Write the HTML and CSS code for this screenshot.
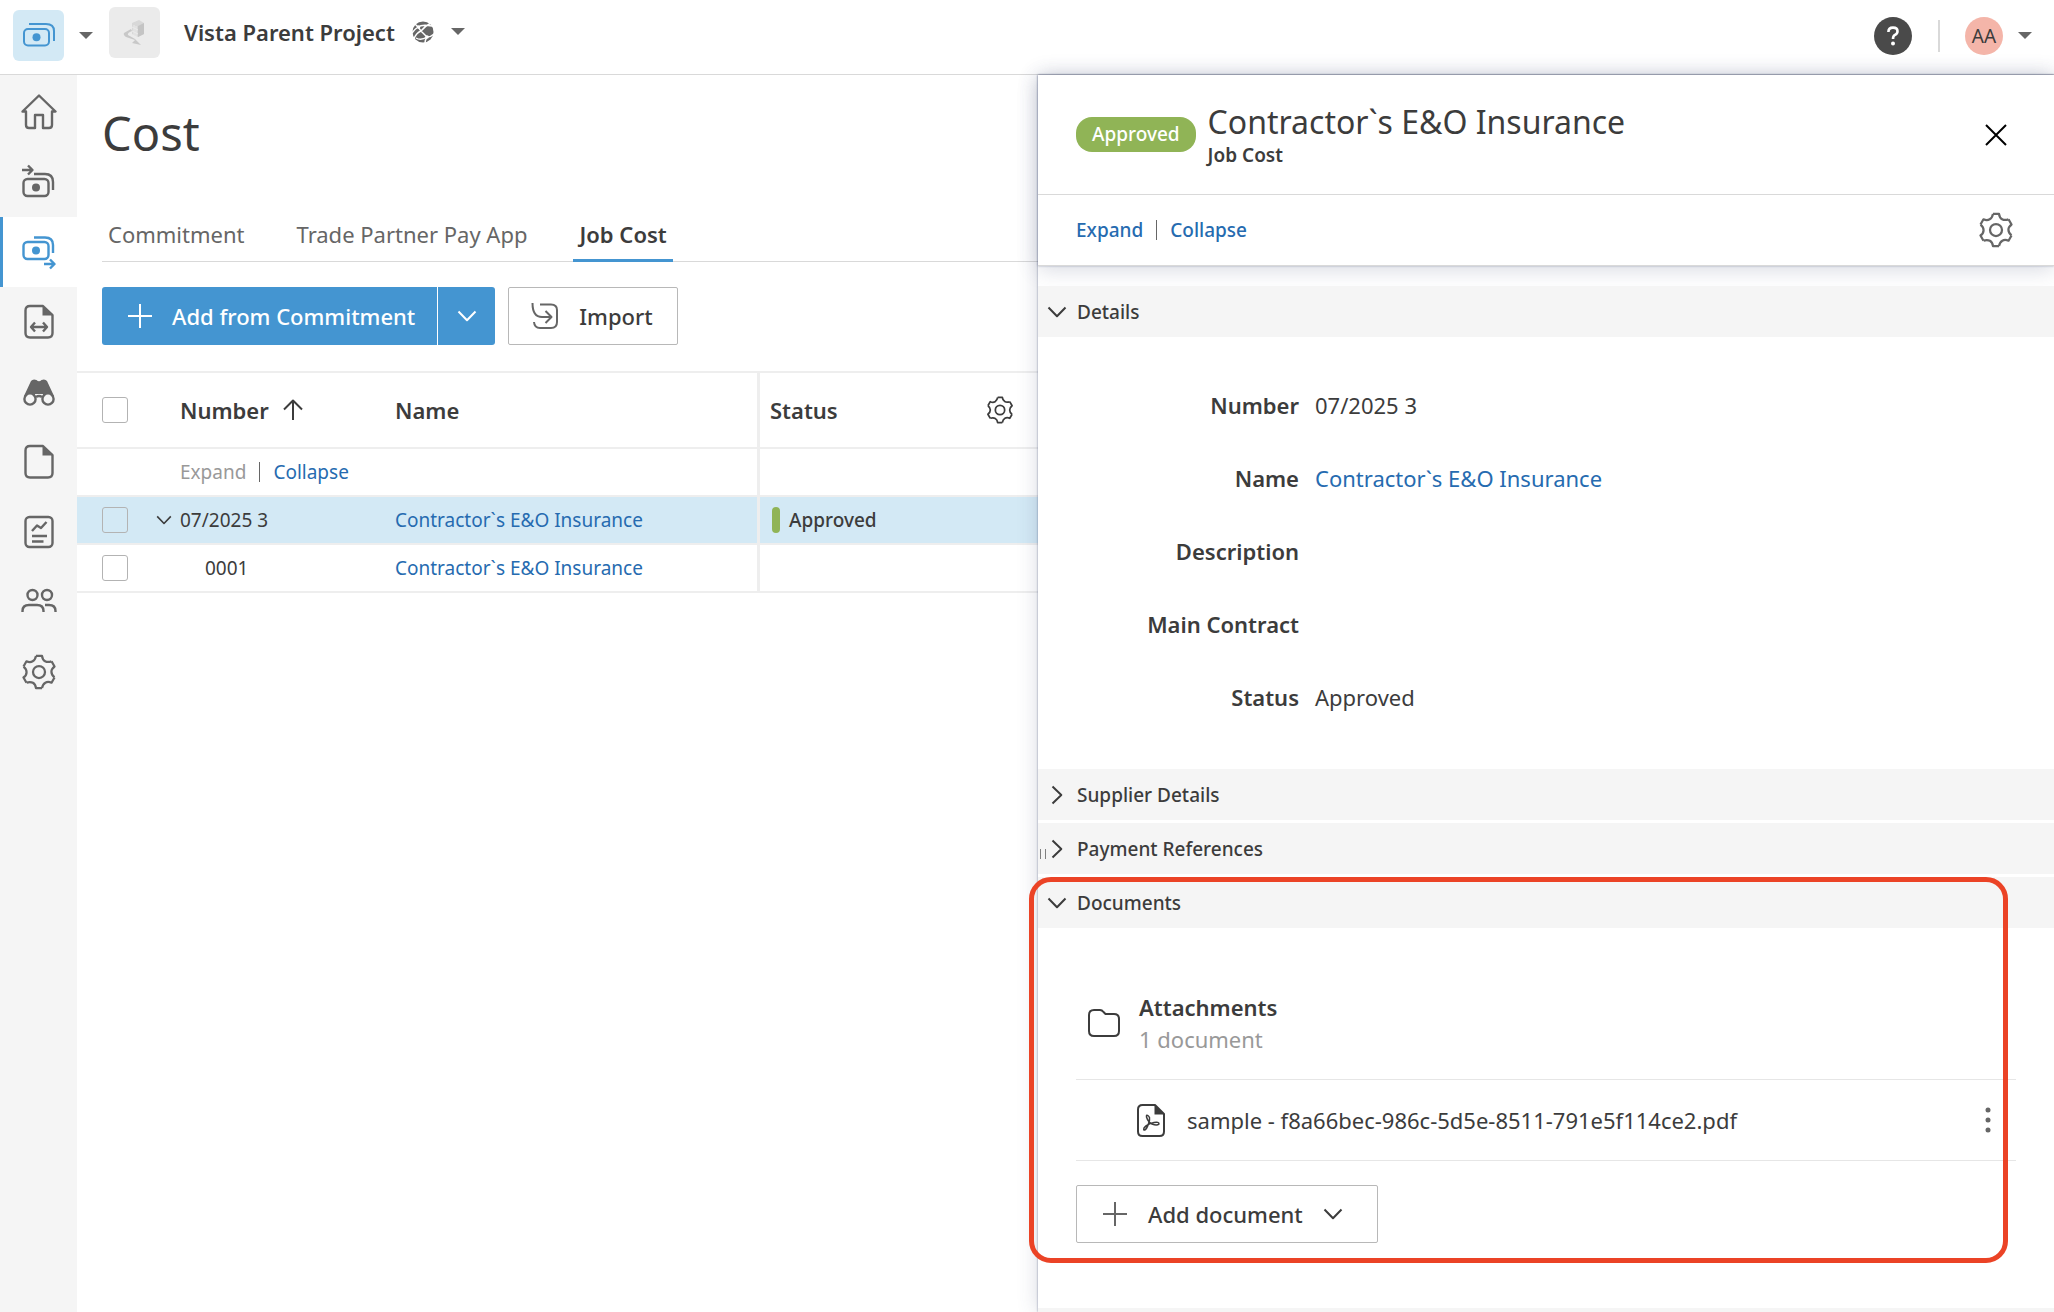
FILE: index.html
```html
<!DOCTYPE html>
<html lang="en">
<head>
  <meta charset="UTF-8">
  <meta name="viewport" content="width=device-width, initial-scale=1.0">
  <title>Cost - Job Cost</title>
  <link rel="stylesheet" href="styles.css">
</head>
<body>
  <!-- shared icons -->
  <svg class="sprite" aria-hidden="true">
    <symbol id="i-gear" viewBox="0 0 24 24">
      <g id="gear-part"><path d="M10 1.2H14C14.4 4.6 17 6.1 20.3 4.9"/></g>
      <use href="#gear-part" transform="rotate(60 12 12)"/>
      <use href="#gear-part" transform="rotate(120 12 12)"/>
      <use href="#gear-part" transform="rotate(180 12 12)"/>
      <use href="#gear-part" transform="rotate(240 12 12)"/>
      <use href="#gear-part" transform="rotate(300 12 12)"/>
      <circle cx="12" cy="12" r="4"/>
    </symbol>
    <symbol id="i-money" viewBox="0 0 36 36">
      <rect x="3" y="11" width="25" height="16.500" rx="4"/>
      <path d="M8 6H25Q33 6 33 13V23"/>
      <circle class="fill" cx="15.500" cy="19.200" r="4"/>
    </symbol>
    <symbol id="i-down" viewBox="0 0 20 12">
      <path d="M1.500 1.500L10 10.300L18.500 1.500"/>
    </symbol>
    <symbol id="i-plus" viewBox="0 0 26 26">
      <path d="M13 1V25M1 13H25"/>
    </symbol>
  </svg>

  <header class="topbar">
    <button class="app-logo" aria-label="Cost Management">
      <svg class="icon" width="36" height="36"><use href="#i-money"/></svg>
    </button>
    <button class="caret" aria-label="Switch product"></button>
    <span class="project-thumb">
      <svg width="24" height="28" viewBox="0 0 24 28">
        <path fill="#d8d8d8" d="M9 4L16 1L21 4V15L15 18L9 15Z"/>
        <path fill="#c4c4c4" d="M15 7L21 4V15L15 18Z"/>
        <path fill="none" stroke="#ebebeb" stroke-width="1" d="M11 6V16M13 7V17M9 8L15 11M9 12L15 15"/>
        <path fill="#c8c8c8" d="M8 10L1 14Q0 16 3 18L12 21L9 24L18 26L12 20L5 16Q4 14 9 12Z"/>
      </svg>
    </span>
    <button class="project-picker">
      Vista Parent Project
      <svg width="22" height="22" viewBox="0 0 22 22">
        <circle cx="11" cy="11" r="10.500" fill="#666"/>
        <path fill="none" stroke="#fff" stroke-width="1.400" d="M3 3Q5 5 6 6Q10 3 20 5M6 6Q3 8 0 12M6 6L9 10L15 16Q19 16 22 13M19 2Q13 5 9 10Q4 12 2 18M15 16Q13 19 13 22M15 16Q9 20 4 17"/>
        <circle cx="6.500" cy="6" r="1.800" fill="#fff"/>
        <circle cx="15" cy="16" r="1.800" fill="#fff"/>
      </svg>
      <span class="caret"></span>
    </button>
    <div class="topbar-right">
      <button class="help" aria-label="Help">
        <svg width="12" height="20" viewBox="0 0 12 20">
          <path fill="none" stroke="#fff" stroke-width="2.600" d="M1.400 6Q1.400 1.600 6 1.600Q10.500 1.600 10.500 5.200Q10.500 7.600 8 8.800Q6 9.800 6 13"/>
          <circle cx="6" cy="17.500" r="2" fill="#fff"/>
        </svg>
      </button>
      <span class="divider"></span>
      <button class="avatar">AA</button>
      <button class="caret" aria-label="Account menu"></button>
    </div>
  </header>

  <div class="layout">
    <nav class="sidebar">
      <a href="#" aria-label="Home">
        <svg class="icon" width="36" height="36" viewBox="0 0 36 36"><path d="M1.500 17.500L18 1.500L34.500 17.500H31V31Q31 34 28 34H22V21H14V34H8Q5 34 5 31V17.500Z"/></svg>
      </a>
      <a href="#" aria-label="Budget">
        <svg class="icon" width="36" height="36" viewBox="0 0 36 36">
          <rect x="2.500" y="15" width="25" height="17" rx="4"/>
          <path d="M13 10H24C29 10 32 13 32 18V26M1 6H11M7 1.500L11.500 6L7 10.500"/>
          <circle class="fill" cx="15" cy="23.500" r="4"/>
        </svg>
      </a>
      <a href="#" class="active" aria-label="Cost">
        <svg class="icon" width="36" height="36" viewBox="0 0 36 36">
          <rect x="2.500" y="8" width="25" height="17" rx="4"/>
          <path d="M13 3.500H24C29 3.500 32 6 32 11V19M23 30H33.500M29 25.500L33.500 30L29 34.500"/>
          <circle class="fill" cx="15" cy="16.500" r="4"/>
        </svg>
      </a>
      <a href="#" aria-label="Change Orders">
        <svg class="icon" width="36" height="36" viewBox="0 0 36 36">
          <path d="M22 2H9Q4.500 2 4.500 6.500V29Q4.500 33.500 9 33.500H27Q31.500 33.500 31.500 29V11Z"/>
          <path class="fill" d="M21.500 2L31.500 11.500H21.500Z"/>
          <path d="M10.500 23H25.500M14 18.500L10 23L14 27.500M22 18.500L26 23L22 27.500"/>
        </svg>
      </a>
      <a href="#" aria-label="Forecast">
        <svg class="icon" width="36" height="36" viewBox="0 0 36 36">
          <path class="fill" d="M3 22L10 7Q12 4.500 15.500 6Q18 8.500 20.500 6Q24 4.500 26 7L33 22L22 23V20H14V23Z"/>
          <circle class="lens" cx="9" cy="25" r="5.600"/>
          <circle class="lens" cx="27" cy="25" r="5.600"/>
          <path d="M15 23Q18 21 21 23"/>
        </svg>
      </a>
      <a href="#" aria-label="Files">
        <svg class="icon" width="36" height="36" viewBox="0 0 36 36">
          <path d="M22 2H9Q4.500 2 4.500 6.500V29Q4.500 33.500 9 33.500H27Q31.500 33.500 31.500 29V11Z"/>
          <path class="fill" d="M21.500 2L31.500 11.500H21.500Z"/>
        </svg>
      </a>
      <a href="#" aria-label="Reports">
        <svg class="icon" width="36" height="36" viewBox="0 0 36 36">
          <rect x="4.500" y="3" width="27" height="30" rx="4"/>
          <path d="M11 17L16 11.500L20 14L25.500 8M11 22H26M11 27.500H22.500"/>
        </svg>
      </a>
      <a href="#" aria-label="Members">
        <svg class="icon" width="36" height="36" viewBox="0 0 36 36">
          <circle cx="11.500" cy="11" r="5"/>
          <circle cx="26" cy="11" r="5"/>
          <path d="M1.500 28V27Q1.500 21 8 21H16Q22.500 21 22.500 27V28M24 21H28Q34.500 21 34.500 27V28"/>
        </svg>
      </a>
      <a href="#" aria-label="Settings">
        <svg class="icon" width="36" height="36"><use href="#i-gear"/></svg>
      </a>
    </nav>

    <main class="main">
      <h1>Cost</h1>
      <nav class="tabs">
        <a href="#">Commitment</a>
        <a href="#">Trade Partner Pay App</a>
        <a href="#" class="active">Job Cost</a>
      </nav>

      <div class="toolbar">
        <div class="split-btn">
          <button class="btn-main">
            <svg class="icon" width="26" height="26"><use href="#i-plus"/></svg>
            Add from Commitment
          </button>
          <button class="btn-more" aria-label="More add options">
            <svg class="icon" width="20" height="12"><use href="#i-down"/></svg>
          </button>
        </div>
        <button class="btn">
          <svg class="icon" width="28" height="28" viewBox="0 0 28 28">
            <path d="M9 2.500H20Q26 2.500 26 8V20Q26 26 20 26H9Q3.500 26 3 20M1.500 1Q1.500 15 11 15H20M14.500 9L20.500 15L14.500 21"/>
          </svg>
          Import
        </button>
      </div>

      <table class="grid">
        <colgroup>
          <col class="col-check">
          <col class="col-number">
          <col>
          <col class="col-status">
        </colgroup>
        <thead>
          <tr>
            <th><input type="checkbox" aria-label="Select all"></th>
            <th class="number">
              <span class="cell">Number
                <svg class="icon dark" width="20" height="22" viewBox="0 0 20 22"><path d="M10 21V2M1 10.500L10 1.500L19 10.500"/></svg>
              </span>
            </th>
            <th>Name</th>
            <th class="status">
              <span class="cell spread">Status
                <button class="plain" aria-label="Column settings"><svg class="icon dark" width="28" height="28"><use href="#i-gear"/></svg></button>
              </span>
            </th>
          </tr>
        </thead>
        <tbody>
          <tr>
            <td></td>
            <td class="number" colspan="2">
              <span class="links"><button class="link" disabled>Expand</button><span class="bar"></span><button class="link">Collapse</button></span>
            </td>
            <td class="status"></td>
          </tr>
          <tr class="selected">
            <td><input type="checkbox" aria-label="Select 07/2025 3"></td>
            <td>
              <span class="cell tree">
                <button class="toggle" aria-label="Collapse row"><svg class="icon dark" width="16" height="10"><use href="#i-down"/></svg></button>07/2025 3
              </span>
            </td>
            <td><a href="#">Contractor`s E&amp;O Insurance</a></td>
            <td class="status"><span class="state">Approved</span></td>
          </tr>
          <tr>
            <td><input type="checkbox" aria-label="Select 0001"></td>
            <td class="child">0001</td>
            <td><a href="#">Contractor`s E&amp;O Insurance</a></td>
            <td class="status"></td>
          </tr>
        </tbody>
      </table>
    </main>

    <aside class="panel">
      <div class="panel-top">
        <div class="panel-head">
          <span class="badge">Approved</span>
          <div class="panel-title">
            <h2>Contractor`s E&amp;O Insurance</h2>
            <p>Job Cost</p>
          </div>
          <button class="plain" aria-label="Close">
            <svg class="icon close" width="22" height="22" viewBox="0 0 22 22"><path d="M1 1L21 21M21 1L1 21"/></svg>
          </button>
        </div>
        <div class="panel-tools">
          <span class="links"><button class="link">Expand</button><span class="bar"></span><button class="link">Collapse</button></span>
          <button class="plain" aria-label="Panel settings"><svg class="icon" width="36" height="36"><use href="#i-gear"/></svg></button>
        </div>
      </div>

      <div class="panel-body">
        <section>
          <button class="section-head"><svg class="icon dark" width="20" height="12"><use href="#i-down"/></svg>Details</button>
          <dl class="fields">
            <dt>Number</dt><dd>07/2025 3</dd>
            <dt>Name</dt><dd><a href="#">Contractor`s E&amp;O Insurance</a></dd>
            <dt>Description</dt><dd></dd>
            <dt>Main Contract</dt><dd></dd>
            <dt>Status</dt><dd>Approved</dd>
          </dl>
        </section>
        <section>
          <button class="section-head"><svg class="icon dark closed" width="20" height="12"><use href="#i-down"/></svg>Supplier Details</button>
        </section>
        <section>
          <button class="section-head"><svg class="icon dark closed" width="20" height="12"><use href="#i-down"/></svg>Payment References</button>
          <span class="grip"></span>
        </section>
        <section class="documents">
          <button class="section-head"><svg class="icon dark" width="20" height="12"><use href="#i-down"/></svg>Documents</button>
          <div class="docs">
            <div class="folder">
              <svg class="icon dark" width="32" height="28" viewBox="0 0 32 28"><path d="M6 1H12Q14 1 15.500 3L17.500 5H26Q31 5 31 10V22Q31 27 26 27H6Q1 27 1 22V6Q1 1 6 1Z"/></svg>
              <div>
                <strong>Attachments</strong>
                <span>1 document</span>
              </div>
            </div>
            <div class="file">
              <svg class="icon dark" width="28" height="33" viewBox="0 0 28 33">
                <path d="M18 1H5.500Q1 1 1 5.500V27.500Q1 32 5.500 32H22.500Q27 32 27 27.500V10Z"/>
                <path class="fill" d="M17.500 1L27 10.500H17.500Z"/>
                <path class="thin" d="M11.500 12Q9 10 9.500 13Q11 18 15 20Q20 22 22 20Q22 17.500 17 18.500Q10 20 7 24Q6 27 8.500 25.500Q11 23 12.500 16Q13 13 11.500 12Z"/>
              </svg>
              <span>sample - f8a66bec-986c-5d5e-8511-791e5f114ce2.pdf</span>
              <button class="plain" aria-label="File actions">
                <svg width="6" height="26" viewBox="0 0 6 26" fill="#666"><circle cx="3" cy="3" r="2.500"/><circle cx="3" cy="13" r="2.500"/><circle cx="3" cy="23" r="2.500"/></svg>
              </button>
            </div>
            <button class="btn">
              <svg class="icon" width="26" height="26"><use href="#i-plus"/></svg>
              Add document
              <svg class="icon dark" width="20" height="12"><use href="#i-down"/></svg>
            </button>
          </div>
          <div class="highlight"></div>
        </section>
        <section>
          <div class="section-head"></div>
        </section>
      </div>
    </aside>
  </div>
</body>
</html>
```

FILE: styles.css
```css
* {
  box-sizing: border-box;
}

body {
  margin: 0;
  height: 100vh;
  display: flex;
  flex-direction: column;
  overflow: hidden;
  font-family: "Noto Sans", sans-serif;
  font-size: 19px;
  line-height: 26px;
  color: #3c3c3c;
  background-color: #fff;
}

button {
  font: inherit;
  color: inherit;
  border: none;
  background: none;
  padding: 0;
  cursor: pointer;
}

a {
  color: #266bb0;
  text-decoration: none;
}

.sprite {
  display: none;
}

/* icons */
.icon {
  fill: none;
  stroke: #666;
  stroke-width: 2;
  stroke-linejoin: round;
  flex-shrink: 0;
  color: #666;
}

.icon .fill,
.fill {
  fill: currentColor;
  stroke: none;
}

.icon use[href="#i-gear"] {
  stroke-width: 1.5;
}

.icon.dark {
  stroke: #3c3c3c;
  color: #3c3c3c;
}

.icon.close {
  stroke: #000;
}

.icon .thin {
  stroke-width: 1.5;
}

.lens {
  fill: #f5f5f5;
}

/* top bar */
.topbar {
  display: flex;
  align-items: center;
  height: 75px;
  flex-shrink: 0;
  padding: 0 22px 3px 13px;
  border-bottom: 1px solid #d9d9d9;
}

.app-logo,
.project-thumb {
  display: flex;
  align-items: center;
  justify-content: center;
  width: 51px;
  height: 51px;
  border-radius: 6px;
}

.app-logo {
  background-color: #d3e9f5;
}

.app-logo .icon,
.sidebar .active .icon {
  stroke: #4495d1;
  color: #4495d1;
}

.caret {
  border: 7px solid transparent;
  border-top-color: #666;
  border-bottom-width: 0;
}

.app-logo + .caret {
  margin: 0 16px 0 15px;
}

.project-thumb {
  background-color: #ebebeb;
  margin-bottom: 6px;
}

.project-picker {
  display: flex;
  align-items: center;
  gap: 17px;
  margin: 0 0 8px 24px;
  font-size: 22px;
  font-weight: 600;
}

.topbar-right {
  display: flex;
  align-items: center;
  margin-left: auto;
}

.help,
.avatar {
  display: flex;
  align-items: center;
  justify-content: center;
  width: 38px;
  height: 38px;
  border-radius: 50%;
}

.help {
  background-color: #4a4a4a;
}

.divider {
  width: 2px;
  height: 32px;
  margin: 0 25px 0 26px;
  background-color: #d9d9d9;
}

.avatar {
  background-color: #f4b5a9;
  margin-right: 15px;
  font-size: 19px;
}

/* page layout */
.layout {
  display: grid;
  grid-template-columns: 77px minmax(0, 961fr) minmax(0, 1016fr);
  flex: 1;
  min-height: 0;
}

.sidebar {
  display: flex;
  flex-direction: column;
  padding-top: 2px;
  background-color: #f5f5f5;
}

.sidebar a {
  display: flex;
  align-items: center;
  justify-content: center;
  height: 70px;
}

.sidebar .icon {
  stroke-width: 2.4;
}

.sidebar .active {
  background-color: #fff;
  border-left: 3px solid #4495d1;
  padding-right: 3px;
}

h1 {
  margin: 26px 0 0 25px;
  font-size: 47px;
  font-weight: 400;
  line-height: 64px;
}

.tabs {
  display: flex;
  gap: 40px;
  margin: 53px 0 0 25px;
  border-bottom: 1px solid #d9d9d9;
  font-size: 22px;
}

.tabs a {
  padding: 0 6px 9px;
  line-height: 32px;
  color: #666;
  border-bottom: 3px solid transparent;
  margin-bottom: -1px;
}

.tabs .active {
  color: #3c3c3c;
  font-weight: 600;
  border-bottom-color: #4495d1;
}

.toolbar {
  display: flex;
  gap: 13px;
  margin: 25px 0 26px 25px;
}

.split-btn {
  display: flex;
  gap: 1px;
  color: #fff;
}

.split-btn button {
  display: flex;
  align-items: center;
  height: 58px;
  background-color: #4495d1;
  font-size: 22px;
  font-weight: 500;
}

.split-btn .icon {
  stroke: #fff;
}

.split-btn .btn-main {
  gap: 19px;
  padding: 0 22px 0 25px;
  border-radius: 3px 0 0 3px;
}

.split-btn .btn-more {
  padding: 0 18px 0 19px;
  border-radius: 0 3px 3px 0;
}

.btn {
  display: flex;
  align-items: center;
  gap: 20px;
  height: 58px;
  padding: 0 24px 0 22px;
  border: 1px solid #b8b8b8;
  border-radius: 2px;
  font-size: 22px;
  font-weight: 500;
}

/* cost table */
.grid {
  width: 100%;
  table-layout: fixed;
  border-collapse: separate;
  border-spacing: 0;
  border-top: 2px solid #eee;
}

.col-check {
  width: 60px;
}

.col-number {
  width: 243px;
}

.col-status {
  width: 281px;
}

.grid th,
.grid td {
  height: 48px;
  padding: 0 0 0 15px;
  border-bottom: 2px solid #eee;
  text-align: left;
}

.grid th {
  height: 76px;
  font-size: 22px;
  font-weight: 600;
}

.grid tr > :first-child {
  padding-left: 25px;
}

.grid .number {
  padding-left: 43px;
}

.grid .child {
  padding-left: 68px;
}

.grid tr > .status {
  padding-left: 10px;
  border-left: 3px solid #eee;
}

.selected {
  background-color: #d3e9f5;
}

.grid input {
  appearance: none;
  display: block;
  width: 26px;
  height: 26px;
  margin: 0;
  border: 1px solid #b3b3b3;
  border-radius: 3px;
}

.cell {
  display: flex;
  align-items: center;
  gap: 14px;
}

.spread {
  justify-content: space-between;
  padding-right: 24px;
}

.grid .tree {
  gap: 0;
  margin-left: -15px;
}

.toggle {
  width: 43px;
  padding-left: 10px;
}

.plain,
.toggle {
  display: flex;
  justify-content: center;
}

.links {
  display: flex;
  align-items: center;
}

.link {
  color: #266bb0;
}

.link:disabled {
  color: #999;
}

.bar {
  width: 1px;
  height: 20px;
  margin: 0 13px;
  background-color: #666;
}

.state {
  display: flex;
  align-items: center;
  gap: 9px;
  margin-left: 2px;
  font-weight: 500;
}

.state::before {
  content: "";
  width: 8px;
  height: 26px;
  border-radius: 4px;
  background-color: #90b456;
}

/* details panel */
.panel {
  position: relative;
  display: flex;
  flex-direction: column;
  min-height: 0;
  background-color: #fff;
  box-shadow: 0 0 20px rgba(60, 70, 110, 0.2), 0 0 2px rgba(60, 70, 110, 0.6);
}

.panel-top {
  position: relative;
  background-color: #fff;
  box-shadow: 0 4px 20px rgba(60, 70, 110, 0.2), 0 0 2px rgba(60, 70, 110, 0.4);
}

.panel-head {
  display: flex;
  align-items: center;
  height: 120px;
  padding: 0 47px 0 38px;
  border-bottom: 1px solid #d9d9d9;
}

.badge {
  padding: 4px 16px 5px;
  border-radius: 16px;
  background-color: #90b456;
  color: #fff;
  font-weight: 500;
}

.panel-title {
  flex: 1;
  margin-left: 12px;
}

.panel-title h2 {
  margin: 0;
  font-size: 32px;
  font-weight: 400;
  line-height: 40px;
}

.panel-title p {
  margin: 0;
  font-weight: 600;
}

.panel-tools {
  display: flex;
  align-items: center;
  justify-content: space-between;
  height: 71px;
  padding: 0 40px 0 38px;
  border-bottom: 1px solid #d9d9d9;
  font-weight: 500;
}

.panel-body {
  display: flex;
  flex-direction: column;
  gap: 3px;
  padding-top: 20px;
  flex: 1;
  min-height: 0;
}

.panel-body section {
  position: relative;
  flex-shrink: 0;
}

.section-head {
  display: flex;
  align-items: center;
  gap: 10px;
  width: 100%;
  height: 51px;
  padding-left: 9px;
  background-color: #f5f5f5;
  font-weight: 500;
}

.closed {
  transform: rotate(-90deg);
}

.fields {
  display: grid;
  grid-template-columns: 261px 1fr;
  column-gap: 16px;
  grid-auto-rows: 73px;
  align-items: center;
  margin: 0;
  padding: 31px 0 33px;
  font-size: 22px;
}

.fields dt {
  text-align: right;
  font-weight: 600;
}

.fields dd {
  margin: 0;
}

.grip {
  position: absolute;
  left: 2px;
  top: 26px;
  width: 6px;
  height: 10px;
  border: 1px solid #808080;
  border-width: 0 1px;
}

.docs {
  padding: 63px 38px 62px;
  font-size: 22px;
}

.folder,
.file {
  display: flex;
  align-items: center;
  border-bottom: 1px solid #e6e6e6;
}

.folder {
  gap: 19px;
  padding: 0 0 24px 12px;
}

.folder strong,
.folder span {
  display: block;
  font-weight: 600;
  line-height: 32px;
}

.folder span {
  font-weight: 400;
  color: #999;
}

.file {
  gap: 22px;
  height: 81px;
  padding: 0 25px 0 61px;
}

.file span {
  flex: 1;
}

.docs .btn {
  margin-top: 24px;
  padding: 0 34px 0 25px;
}

.highlight {
  position: absolute;
  left: -9px;
  right: 46px;
  top: 0;
  bottom: 42px;
  border: 5px solid #eb4326;
  border-radius: 22px;
  pointer-events: none;
}
```
